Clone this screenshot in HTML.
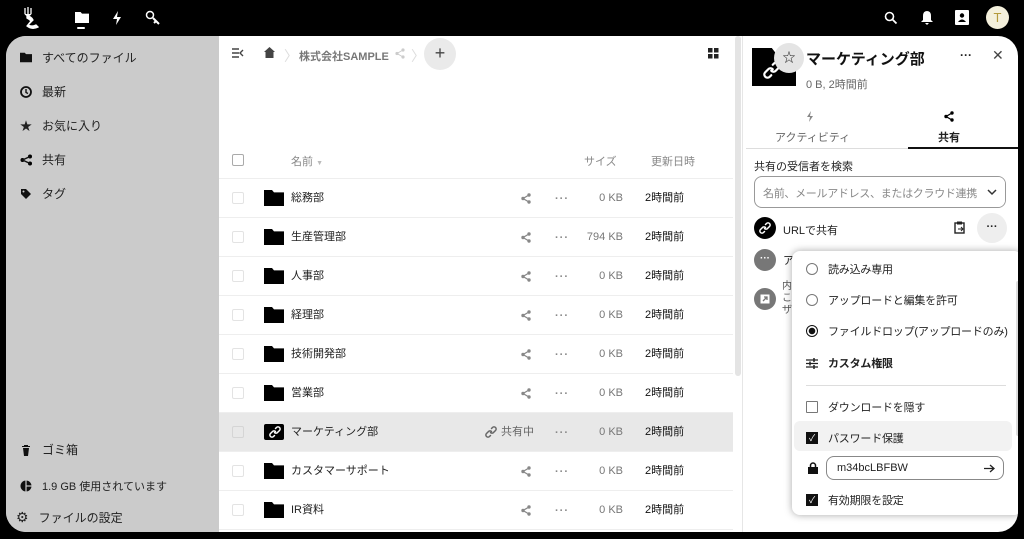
<!DOCTYPE html><html><head><meta charset="utf-8"><style>
*{box-sizing:border-box;margin:0;padding:0}
body{width:1024px;height:539px;background:#000;font-family:"Liberation Sans","Noto Sans CJK JP",sans-serif;position:relative;overflow:hidden;color:#222}
.a{position:absolute}
.main{left:6px;top:36px;width:1012px;height:496px;background:#fff;border-radius:20px;overflow:hidden}
.side{left:0;top:0;width:213px;height:496px;background:#cbcbcb}
.nav{position:absolute;left:14px;font-size:12px;display:flex;align-items:center;gap:10px;color:#222}
.ic{width:12px;height:12px;display:inline-block}
.row{position:absolute;left:213px;width:514px;height:39px;border-bottom:1px solid #eee;font-size:11px;line-height:14px}
.row .cb{position:absolute;left:13px;top:13px;width:12px;height:12px;border:1px solid #e3e3e3;border-radius:2px}
.row .fd{position:absolute;left:45px;top:11px;width:20px;height:16px;background:#000;clip-path:polygon(0 0,40% 0,50% 15%,100% 15%,100% 100%,0 100%)}
.row .nm{position:absolute;left:72px;top:12px;color:#222}
.row .sh{position:absolute;left:302px;top:14px}
.row .dt{position:absolute;left:336px;top:13px;color:#888;font-size:11px;font-weight:bold;letter-spacing:1px}
.row .sz{position:absolute;right:110px;top:12px;color:#777}
.row .tm{position:absolute;left:426px;top:12px;color:#111}
.pi{position:absolute;left:14px;font-size:11px;display:flex;align-items:center;gap:10px;color:#222;letter-spacing:-0.2px}
.rad{width:12px;height:12px;border:1px solid #777;border-radius:50%}
.chk{width:12px;height:12px;background:#111;color:#fff;font-size:9px;line-height:12px;text-align:center}
</style></head><body>
<svg class="a" style="left:20px;top:6px" width="22" height="24" viewBox="0 0 22 24"><path d="M5 2v6M8 1v7M11 2v6M5 8q3 3 6 0M7 10q4 0 6 4l-5 5q4 2 8 0l2 2q-6 3-11-1l4-5q-2-2-4-3z" stroke="#fff" fill="#fff" stroke-width="1.3"/></svg>
<div class="a" style="left:75px;top:12px;width:14px;height:11px;background:#fff;clip-path:polygon(0 0,40% 0,50% 15%,100% 15%,100% 100%,0 100%)"></div>
<div class="a" style="left:77px;top:27px;width:8px;height:2px;background:#fff;border-radius:1px"></div>
<svg class="a" style="left:112px;top:11px" width="10" height="14"><path d="M6 0L1 8h4l-1 6 5-8H5z" fill="#fff"/></svg>
<svg class="a" style="left:145px;top:10px" width="16" height="16"><circle cx="5" cy="5" r="3.5" stroke="#fff" stroke-width="1.5" fill="none"/><path d="M8 8l6 6M11 11l-2 2" stroke="#fff" stroke-width="2"/></svg>
<svg class="a" style="left:884px;top:11px" width="14" height="14"><circle cx="5.5" cy="5.5" r="4" stroke="#fff" stroke-width="1.6" fill="none"/><path d="M8.5 8.5l4 4" stroke="#fff" stroke-width="1.8"/></svg>
<svg class="a" style="left:920px;top:10px" width="14" height="15"><path d="M7 1q4 0 4 5v4l2 2H1l2-2V6q0-5 4-5zM5 13h4l-2 2z" fill="#fff"/></svg>
<svg class="a" style="left:955px;top:10px" width="14" height="15"><rect x="0" y="0" width="14" height="15" rx="1" fill="#fff"/><circle cx="7" cy="5.5" r="2.2"/><path d="M3 12q4-5 8 0z"/></svg>
<div class="a" style="left:986px;top:6px;width:23px;height:23px;border-radius:50%;background:#f4f0dc;color:#b49a3c;font-size:13px;text-align:center;line-height:23px">T</div>

<svg width="0" height="0" style="position:absolute"><defs>
<g id="sh"><circle cx="8" cy="2" r="1.7" fill="#888"/><circle cx="2" cy="5.5" r="1.7" fill="#888"/><circle cx="8" cy="9" r="1.7" fill="#888"/><path d="M8 2L2 5.5 8 9" stroke="#888" fill="none" stroke-width="1.3"/></g>
<g id="lk"><path d="M6.5 2.5l1-1a2 2 0 0 1 3 3l-2 2a2 2 0 0 1-3 0M5.5 9.5l-1 1a2 2 0 0 1-3-3l2-2a2 2 0 0 1 3 0" stroke-width="1.5" fill="none" stroke-linecap="round"/></g>
</defs></svg>

<div class="a main">
 <div class="a side">
  <div class="nav" style="top:13px"><span class="ic" style="background:#111;clip-path:polygon(0 10%,40% 10%,50% 22%,100% 22%,100% 90%,0 90%)"></span>すべてのファイル</div>
  <div class="nav" style="top:47px"><svg width="12" height="12"><circle cx="6" cy="6" r="5" stroke="#111" stroke-width="1.8" fill="none"/><path d="M6 3v3.5l2 1" stroke="#111" stroke-width="1.4" fill="none"/></svg>最新</div>
  <div class="nav" style="top:81px"><span style="font-size:12px;width:12px">★</span>お気に入り</div>
  <div class="nav" style="top:115px"><svg width="12" height="12"><circle cx="10" cy="2.5" r="2"/><circle cx="2.5" cy="6" r="2"/><circle cx="10" cy="9.5" r="2"/><path d="M10 2.5L2.5 6 10 9.5" stroke="#111" stroke-width="1.4" fill="none"/></svg>共有</div>
  <div class="nav" style="top:149px"><svg width="12" height="12"><path d="M1 1h5l5 5-5 5-5-5z" fill="#111"/><circle cx="3.5" cy="3.5" r="1" fill="#cbcbcb"/></svg>タグ</div>
  <div class="nav" style="top:405px"><svg width="12" height="12"><path d="M2 2h8v1H2zM4 1h4v1H4zM3 4h6l-1 8H4z" fill="#111"/></svg>ゴミ箱</div>
  <div class="nav" style="top:442px;font-size:11px"><svg width="12" height="12"><circle cx="6" cy="6" r="5.5" fill="#111"/><path d="M6 0v12" stroke="#cbcbcb" stroke-width="1.2"/><path d="M6 6h6" stroke="#cbcbcb" stroke-width="1.2"/></svg>1.9 GB 使用されています</div>
  <div class="nav" style="top:473px;left:10px"><span style="font-size:14px">⚙</span>ファイルの設定</div>
 </div>
 <svg class="a" style="left:226px;top:12px" width="12" height="10"><path d="M0 1h7M0 5h7M0 9h7M11 2L8 5l3 3" stroke="#444" stroke-width="1.4" fill="none"/></svg>
 <svg class="a" style="left:258px;top:11px" width="11" height="11"><path d="M5.5 0L0 5h1.5v6h8V5H11z" fill="#444"/></svg>
 <div class="a" style="left:278px;top:10px;color:#ddd;font-size:14px">〉</div>
 <div class="a" style="left:293px;top:12px;color:#777;font-size:11px;font-weight:bold">株式会社SAMPLE</div>
 <svg class="a" style="left:389px;top:12px" width="10" height="11"><circle cx="8" cy="2" r="1.6" fill="#ccc"/><circle cx="2" cy="5.5" r="1.6" fill="#ccc"/><circle cx="8" cy="9" r="1.6" fill="#ccc"/><path d="M8 2L2 5.5 8 9" stroke="#ccc" fill="none"/></svg>
 <div class="a" style="left:405px;top:10px;color:#ddd;font-size:14px">〉</div>
 <div class="a" style="left:418px;top:2px;width:32px;height:32px;border-radius:50%;background:#eaeaea;text-align:center;line-height:31px;font-size:18px;color:#444">+</div>
 <svg class="a" style="left:702px;top:12px" width="11" height="11"><rect width="4.5" height="4.5" fill="#222"/><rect x="6" width="4.5" height="4.5" fill="#222"/><rect y="6" width="4.5" height="4.5" fill="#222"/><rect x="6" y="6" width="4.5" height="4.5" fill="#222"/></svg>
 <div class="a" style="left:213px;top:106px;width:514px;height:37px;border-bottom:1px solid #eee;font-size:11px;color:#888">
  <div class="a" style="left:13px;top:12px;width:12px;height:12px;border:1px solid #aaa;border-radius:2px"></div>
  <div class="a" style="left:72px;top:11px">名前 <span style="font-size:7px;color:#bbb">▼</span></div>
  <div class="a" style="left:365px;top:11px">サイズ</div>
  <div class="a" style="left:432px;top:11px">更新日時</div>
 </div>
 <div class="row" style="top:143px"><div class="cb"></div><div class="fd"></div><div class="nm">総務部</div><svg class="sh" width="10" height="11"><use href="#sh"/></svg><div class="dt">···</div><div class="sz">0 KB</div><div class="tm">2時間前</div></div>
 <div class="row" style="top:182px"><div class="cb"></div><div class="fd"></div><div class="nm">生産管理部</div><svg class="sh" width="10" height="11"><use href="#sh"/></svg><div class="dt">···</div><div class="sz">794 KB</div><div class="tm">2時間前</div></div>
 <div class="row" style="top:221px"><div class="cb"></div><div class="fd"></div><div class="nm">人事部</div><svg class="sh" width="10" height="11"><use href="#sh"/></svg><div class="dt">···</div><div class="sz">0 KB</div><div class="tm">2時間前</div></div>
 <div class="row" style="top:260px"><div class="cb"></div><div class="fd"></div><div class="nm">経理部</div><svg class="sh" width="10" height="11"><use href="#sh"/></svg><div class="dt">···</div><div class="sz">0 KB</div><div class="tm">2時間前</div></div>
 <div class="row" style="top:299px"><div class="cb"></div><div class="fd"></div><div class="nm">技術開発部</div><svg class="sh" width="10" height="11"><use href="#sh"/></svg><div class="dt">···</div><div class="sz">0 KB</div><div class="tm">2時間前</div></div>
 <div class="row" style="top:338px"><div class="cb"></div><div class="fd"></div><div class="nm">営業部</div><svg class="sh" width="10" height="11"><use href="#sh"/></svg><div class="dt">···</div><div class="sz">0 KB</div><div class="tm">2時間前</div></div>
 <div class="row" style="top:377px;background:#e8e8e8"><div class="cb" style="border-color:#d5d5d5"></div><div class="fd" style="clip-path:none;border-radius:2px"></div><svg class="a" style="left:50px;top:13px" width="12" height="12"><use href="#lk" stroke="#fff"/></svg><div class="nm">マーケティング部</div><svg class="a" style="left:266px;top:13px" width="12" height="12"><use href="#lk" stroke="#666"/></svg><div class="a" style="left:282px;top:12px;color:#666">共有中</div><div class="dt">···</div><div class="sz">0 KB</div><div class="tm">2時間前</div></div>
 <div class="row" style="top:416px"><div class="cb"></div><div class="fd"></div><div class="nm">カスタマーサポート</div><svg class="sh" width="10" height="11"><use href="#sh"/></svg><div class="dt">···</div><div class="sz">0 KB</div><div class="tm">2時間前</div></div>
 <div class="row" style="top:455px"><div class="cb"></div><div class="fd"></div><div class="nm">IR資料</div><svg class="sh" width="10" height="11"><use href="#sh"/></svg><div class="dt">···</div><div class="sz">0 KB</div><div class="tm">2時間前</div></div>
 <div class="a" style="left:729px;top:0;width:6px;height:340px;background:#e4e4e4;border-radius:3px"></div>
 <div class="a" style="left:736px;top:0;width:1px;height:496px;background:#e6e6e6"></div>
 <div class="a" style="left:746px;top:12px;width:44px;height:38px;background:#000;clip-path:polygon(0 0,45% 0,55% 15%,100% 15%,100% 100%,0 100%)"></div>
 <svg class="a" style="left:757px;top:25px" width="18" height="18" viewBox="0 0 12 12"><use href="#lk" stroke="#fff"/></svg>
 <div class="a" style="left:768px;top:7px;width:30px;height:30px;border-radius:50%;background:#e4e4e4;text-align:center;line-height:30px;font-size:13px">☆</div>
 <div class="a" style="left:800px;top:12px;font-size:15px;font-weight:bold;color:#111">マーケティング部</div>
 <div class="a" style="left:800px;top:40px;font-size:11px;color:#666">0 B, 2時間前</div>
 <div class="a" style="left:954px;top:12px;font-size:12px;font-weight:bold">···</div>
 <div class="a" style="left:986px;top:11px;font-size:14px;color:#444">✕</div>
 <svg class="a" style="left:800px;top:75px" width="8" height="11"><path d="M5 0L1 6h3l-1 5 4-6H4z" fill="#888"/></svg>
 <div class="a" style="left:769px;top:93px;font-size:11px;color:#666">アクティビティ</div>
 <svg class="a" style="left:938px;top:75px" width="10" height="11"><circle cx="8" cy="2" r="1.7"/><circle cx="2" cy="5.5" r="1.7"/><circle cx="8" cy="9" r="1.7"/><path d="M8 2L2 5.5 8 9" stroke="#000" fill="none" stroke-width="1.3"/></svg>
 <div class="a" style="left:932px;top:93px;font-size:11px;font-weight:bold">共有</div>
 <div class="a" style="left:740px;top:112px;width:162px;height:1px;background:#ddd"></div>
 <div class="a" style="left:902px;top:111px;width:110px;height:2px;background:#111"></div>
 <div class="a" style="left:748px;top:122px;font-size:11px;color:#222">共有の受信者を検索</div>
 <div class="a" style="left:748px;top:140px;width:252px;height:32px;border:1px solid #999;border-radius:8px;font-size:11px;color:#888;padding:8px 8px;overflow:hidden;white-space:nowrap;letter-spacing:-0.3px">名前、メールアドレス、またはクラウド連携<span style="position:absolute;right:0;top:0;width:24px;height:30px;background:#fff"></span><svg class="a" style="right:8px;top:12px" width="10" height="7"><path d="M1 1l4 4 4-4" stroke="#333" stroke-width="1.5" fill="none"/></svg></div>
 <div class="a" style="left:748px;top:181px;width:22px;height:22px;border-radius:50%;background:#000"></div>
 <svg class="a" style="left:753px;top:186px" width="12" height="12"><use href="#lk" stroke="#fff"/></svg>
 <div class="a" style="left:777px;top:186px;font-size:11px">URLで共有</div>
 <svg class="a" style="left:948px;top:185px" width="11" height="13"><rect x="1" y="2" width="9" height="10" stroke="#222" stroke-width="1.4" fill="none"/><rect x="3" y="0.5" width="5" height="3" fill="#222"/><path d="M4 8h5M7 6l2 2-2 2" stroke="#222" fill="none"/></svg>
 <div class="a" style="left:971px;top:177px;width:30px;height:30px;border-radius:50%;background:#eee;text-align:center;line-height:28px;font-size:11px;font-weight:bold">···</div>
 <div class="a" style="left:748px;top:213px;width:22px;height:22px;border-radius:50%;background:#777;color:#fff;font-size:10px;text-align:center;line-height:20px;font-weight:bold">···</div>
 <div class="a" style="left:777px;top:216px;font-size:11px">ア</div>
 <div class="a" style="left:748px;top:252px;width:22px;height:22px;border-radius:50%;background:#777"></div>
 <svg class="a" style="left:754px;top:258px" width="10" height="10"><rect x="0.5" y="0.5" width="9" height="9" fill="#fff"/><path d="M3 7l4-4M4 3h3v3" stroke="#777" stroke-width="1.3" fill="none"/></svg>
 <div class="a" style="left:776px;top:245px;font-size:10px;color:#555;line-height:12px">内<br>こ<br>ザ</div>
 <div class="a" style="left:786px;top:215px;width:230px;height:264px;background:#fff;border-radius:8px;box-shadow:0 0 8px rgba(0,0,0,.35)">
  <div class="pi" style="top:10px"><span class="rad"></span>読み込み専用</div>
  <div class="pi" style="top:41px"><span class="rad"></span>アップロードと編集を許可</div>
  <div class="pi" style="top:72px"><span class="rad" style="border:1px solid #111;background:radial-gradient(circle,#111 3px,#fff 3.5px)"></span>ファイルドロップ(アップロードのみ)</div>
  <div class="pi" style="top:104px;font-weight:bold"><svg width="12" height="11"><path d="M0 2h12M0 5.5h12M0 9h12" stroke="#222" stroke-width="1.2"/><path d="M8 0v4M4 3.5v4M8 7v4" stroke="#222" stroke-width="1.5"/></svg>カスタム権限</div>
  <div class="a" style="left:14px;top:134px;width:200px;height:1px;background:#ddd"></div>
  <div class="pi" style="top:148px"><span class="rad" style="border-radius:1px"></span>ダウンロードを隠す</div>
  <div class="a" style="left:2px;top:170px;width:218px;height:30px;background:#f2f2f2;border-radius:6px"></div>
  <div class="pi" style="top:179px"><span class="chk">✓</span>パスワード保護</div>
  <svg class="a" style="left:16px;top:211px" width="10" height="12"><rect x="0" y="5" width="10" height="7" fill="#111"/><path d="M2.5 5V3.5a2.5 2.5 0 0 1 5 0V5" stroke="#111" stroke-width="1.5" fill="none"/></svg>
  <div class="a" style="left:34px;top:205px;width:178px;height:24px;border:1px solid #888;border-radius:8px;font-size:11px;padding:5px 10px">m34bcLBFBW<svg class="a" style="right:8px;top:7px" width="11" height="9"><path d="M0 4.5h10M6 1l4 3.5L6 8" stroke="#222" stroke-width="1.3" fill="none"/></svg></div>
  <div class="pi" style="top:241px"><span class="chk">✓</span>有効期限を設定</div>
  <div class="a" style="left:224px;top:30px;width:4px;height:155px;background:#ddd;border-radius:2px"></div>
 </div>
</div>
</body></html>
